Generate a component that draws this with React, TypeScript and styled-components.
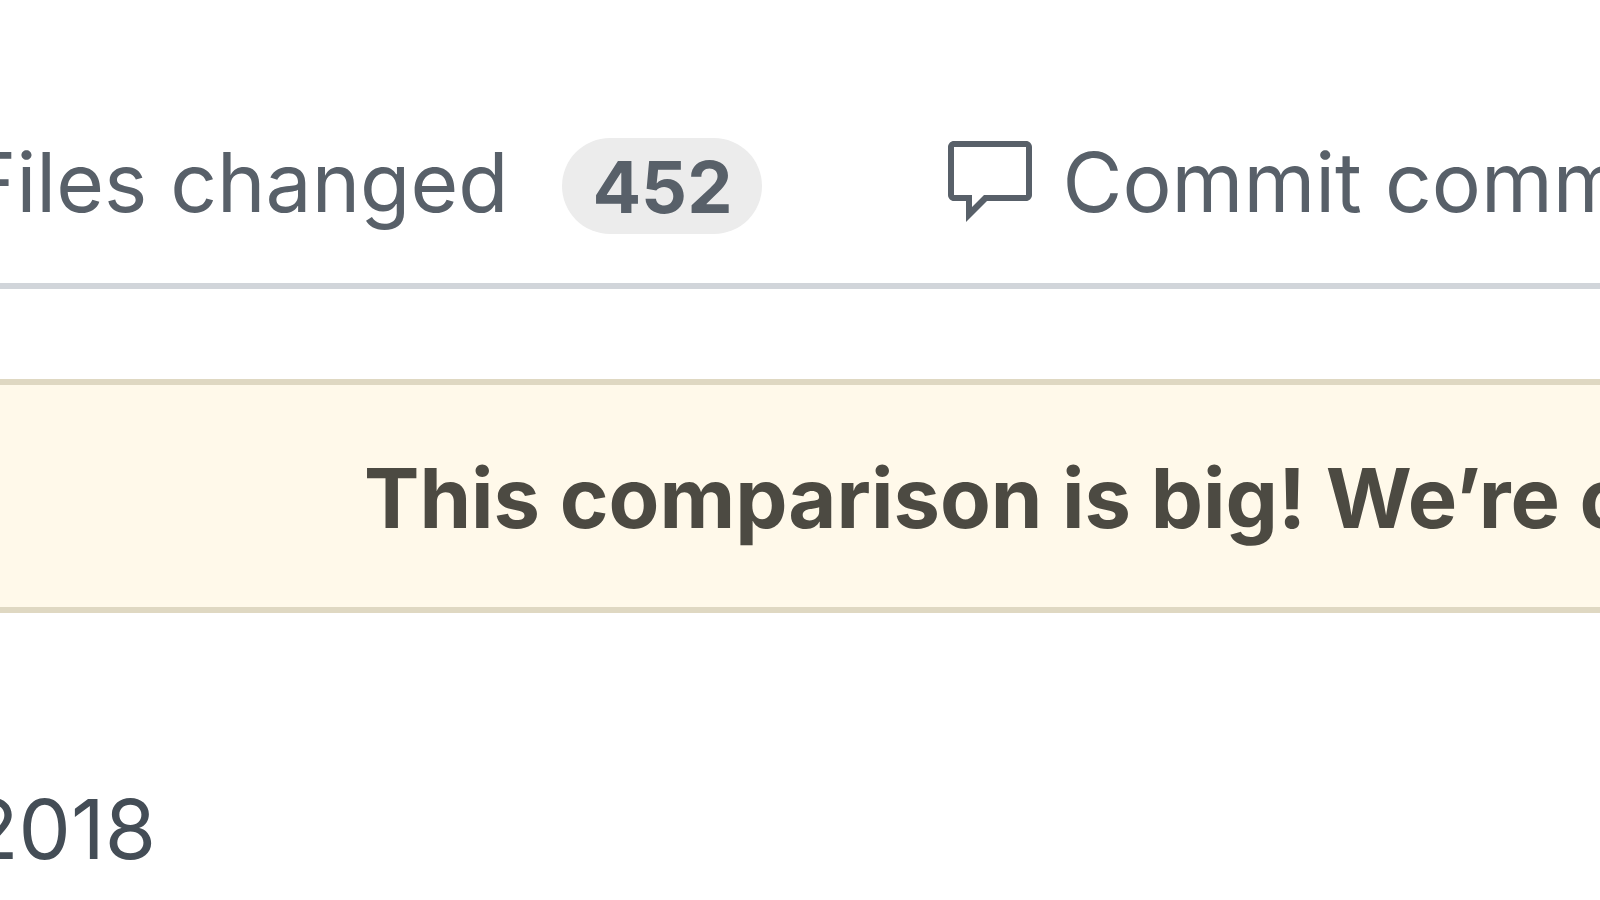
import React from "react";
import styled, { createGlobalStyle } from "styled-components";

const GlobalStyle = createGlobalStyle`
  *, *::before, *::after { box-sizing: border-box; }
  body {
    margin: 0;
    background: #fff;
    color: #444d56;
    font-family: Inter, "Liberation Sans", sans-serif;
    font-size: 82px;
    line-height: 126px;
    overflow: hidden;
  }
`;

const Page = styled.main`
  display: flex;
  flex-direction: column;
  min-height: 100vh;
  overflow: hidden;
  white-space: nowrap;
`;

const Tabs = styled.nav`
  display: flex;
  padding: 120px 0 37px;
  border-bottom: 6px solid #d1d5da;
`;

const Tab = styled.a`
  display: flex;
  flex: none;
  align-items: center;
  padding: 0 90px;
  color: #586069;
  text-decoration: none;

  &:first-child {
    padding-left: 0;
    margin-left: -32px;
  }
`;

const Counter = styled.span`
  margin: 6px 0 0 54px;
  padding: 2px 30px 0;
  border-radius: 48px;
  background: #ececec;
  font-size: 72px;
  font-weight: 700;
  line-height: 94px;
`;

const Icon = styled.svg`
  width: 96px;
  height: 96px;
  margin-right: 24px;
  fill: currentColor;
`;

const Notice = styled.section`
  margin-top: 90px;
  padding: 50px 0 46px 364px;
  border: solid #dfd8c2;
  border-width: 6px 0;
  background: #fff9ea;
  color: #4c4a42;
  font-size: 83px;
  font-weight: 700;
`;

const CommitDate = styled.time`
  margin: 153px 0 0 -32px;
  font-size: 83px;
`;

export default function App() {
  return (
    <>
      <GlobalStyle />
      <Page>
        <Tabs aria-label="Comparison">
          <Tab href="#files">
            Files changed
            <Counter>452</Counter>
          </Tab>
          <Tab href="#comments">
            <Icon viewBox="0 0 16 16" aria-hidden="true">
              <path
                fillRule="evenodd"
                d="M14 1H2c-.55 0-1 .45-1 1v8c0 .55.45 1 1 1h2v3.5L7.5 11H14c.55 0 1-.45 1-1V2c0-.55-.45-1-1-1zm0 9H7l-2 2v-2H2V2h12v8z"
              />
            </Icon>
            Commit comments
          </Tab>
        </Tabs>
        <Notice>This comparison is big! We’re only showing</Notice>
        <CommitDate dateTime="2018">2018</CommitDate>
      </Page>
    </>
  );
}
